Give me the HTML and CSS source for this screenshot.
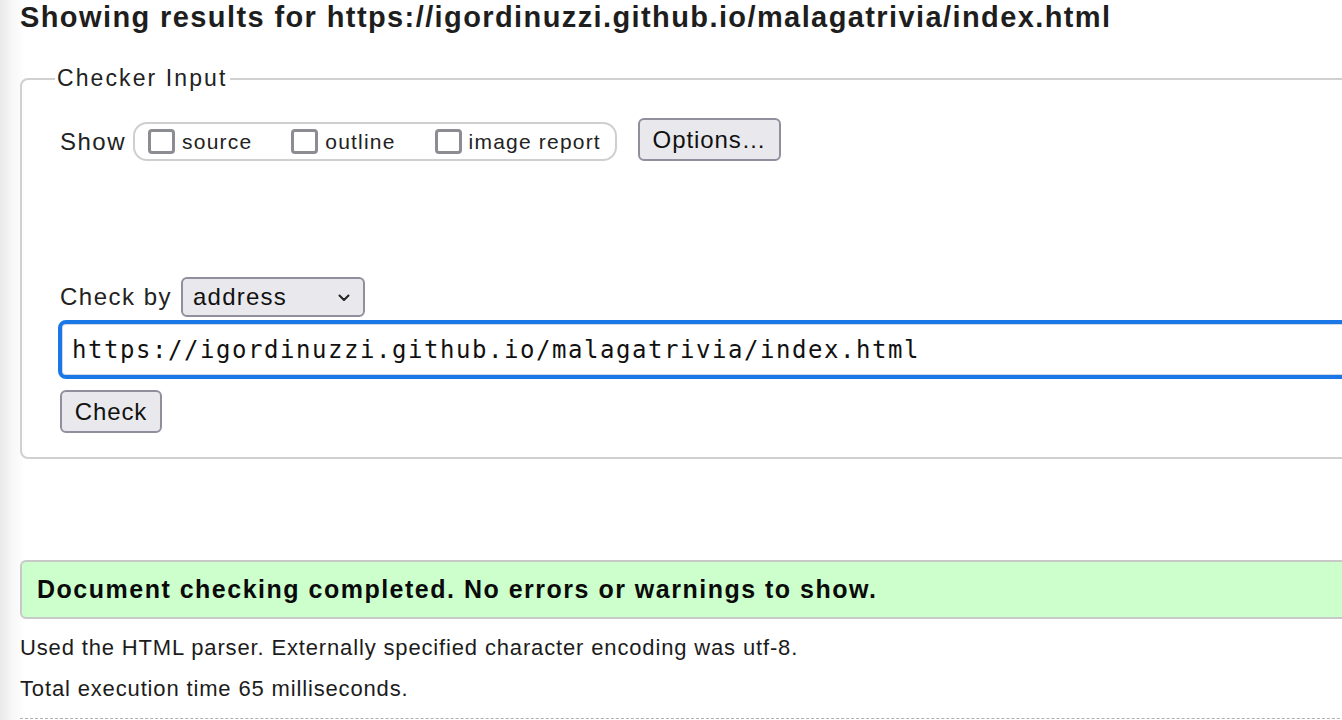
FILE: index.html
```html
<!DOCTYPE html>
<html lang="en">
<head>
<meta charset="utf-8">
<title>Nu Html Checker</title>
<link rel="stylesheet" href="styles.css">
</head>
<body>
<div class="page">
  <h2 class="title">Showing results for https://igordinuzzi.github.io/malagatrivia/index.html</h2>
  <fieldset class="checker">
    <legend class="legend">Checker Input</legend>
    <div class="show-row">
      <span class="label">Show</span>
      <div class="pill">
        <label class="opt"><span class="cb"></span>source</label>
        <label class="opt"><span class="cb"></span>outline</label>
        <label class="opt"><span class="cb"></span>image report</label>
      </div>
      <button class="btn btn-options">Options…</button>
    </div>
    <div class="checkby-row">
      <span class="label">Check by</span>
      <div class="select">
        <span>address</span>
        <svg class="chev" width="14" height="10" viewBox="0 0 14 10"><path d="M2.5 2.5 L7 7 L11.5 2.5" fill="none" stroke="#222" stroke-width="2" stroke-linecap="round" stroke-linejoin="round"/></svg>
      </div>
    </div>
    <div class="url">https://igordinuzzi.github.io/malagatrivia/index.html</div>
    <button class="btn btn-check">Check</button>
  </fieldset>
  <div class="success">Document checking completed. No errors or warnings to show.</div>
  <p class="info info-first">Used the HTML parser. Externally specified character encoding was utf-8.</p>
  <p class="info">Total execution time 65 milliseconds.</p>
  <div class="dotted"></div>
</div>
</body>
</html>
```
FILE: styles.css
```css
html, body {
  margin: 0;
  padding: 0;
  overflow: hidden;
  height: 100%;
}
body {
  background: linear-gradient(to right, #e9e9e9 0px, #f7f7f7 12px, #ffffff 26px);
  font-family: "Liberation Sans", Arial, sans-serif;
  color: #1c1c1c;
}
.page {
  width: 1420px;
  padding-left: 20px;
}
.title {
  margin: 0;
  padding-top: 2px;
  font-size: 29px;
  font-weight: bold;
  line-height: 30px;
  color: #1e1e1e;
  letter-spacing: 1.4px;
}
.checker {
  margin: 33px 0 0 0;
  border: 2px solid #d0d0d0;
  border-radius: 8px;
  padding: 22px 0 24px 38px;
  min-width: 0;
}
.legend {
  margin-left: -5px;
  padding: 0 2px;
  font-size: 23px;
  letter-spacing: 2.1px;
  color: #222;
}
.show-row {
  display: flex;
  align-items: center;
  margin-top: 8px;
}
.label {
  font-size: 24px;
  letter-spacing: 1.5px;
  color: #222;
}
.pill {
  display: flex;
  align-items: center;
  margin-left: 7px;
  width: 467px;
  height: 35px;
  border: 2px solid #cfcfcf;
  border-radius: 14px;
  padding-left: 13px;
}
.opt {
  display: flex;
  align-items: center;
  font-size: 21px;
  letter-spacing: 1.2px;
  color: #222;
  margin-right: 39px;
}
.opt:last-child { margin-right: 0; }
.cb {
  width: 21px;
  height: 19px;
  border: 3px solid #8c8c93;
  border-radius: 4px;
  margin-right: 7px;
  background: #fff;
  flex: none;
}
.btn {
  font-family: "Liberation Sans", Arial, sans-serif;
  background: #e9e9ed;
  border: 2px solid #8f8f9d;
  border-radius: 6px;
  color: #111;
  font-size: 24px;
  letter-spacing: 0.9px;
  padding: 0;
  box-sizing: border-box;
}
.btn-options {
  margin-left: 21px;
  width: 143px;
  height: 43px;
  margin-top: -4px;
  flex: none;
}
.checkby-row {
  display: flex;
  align-items: center;
  margin-top: 116px;
}
.select {
  margin-left: 9px;
  width: 184px;
  height: 40px;
  box-sizing: border-box;
  background: #e9e9ed;
  border: 2px solid #8f8f9d;
  border-radius: 6px;
  display: flex;
  align-items: center;
  justify-content: space-between;
  padding: 0 12px 0 10px;
  font-size: 24px;
  letter-spacing: 1.2px;
  color: #111;
  flex: none;
}
.chev { margin-top: 2px; }
.url {
  margin: 3px 0 0 -2px;
  height: 59px;
  box-sizing: border-box;
  border: 4px solid #1a78e6;
  border-radius: 8px;
  box-shadow: inset 0 0 0 1px #cfd8e6;
  display: flex;
  align-items: center;
  padding-left: 10px;
  font-family: "DejaVu Sans Mono", "Liberation Mono", monospace;
  font-size: 24px;
  letter-spacing: 1.55px;
  color: #111;
}
.btn-check {
  display: block;
  margin-top: 11px;
  width: 102px;
  height: 43px;
}
.success {
  margin-top: 101px;
  height: 59px;
  box-sizing: border-box;
  background: #ccffcc;
  border: 2px solid #c8c8c8;
  border-radius: 6px;
  display: flex;
  align-items: center;
  padding-left: 15px;
  font-size: 25px;
  font-weight: bold;
  letter-spacing: 1.5px;
  color: #0a0a0a;
}
.info {
  margin: 0;
  font-size: 22px;
  letter-spacing: 0.85px;
  color: #1c1c1c;
  line-height: 41px;
}
.info-first {
  margin-top: 8px;
}
.dotted {
  margin-top: 9px;
  border-top: 1px dashed #b0b0b0;
}
```
